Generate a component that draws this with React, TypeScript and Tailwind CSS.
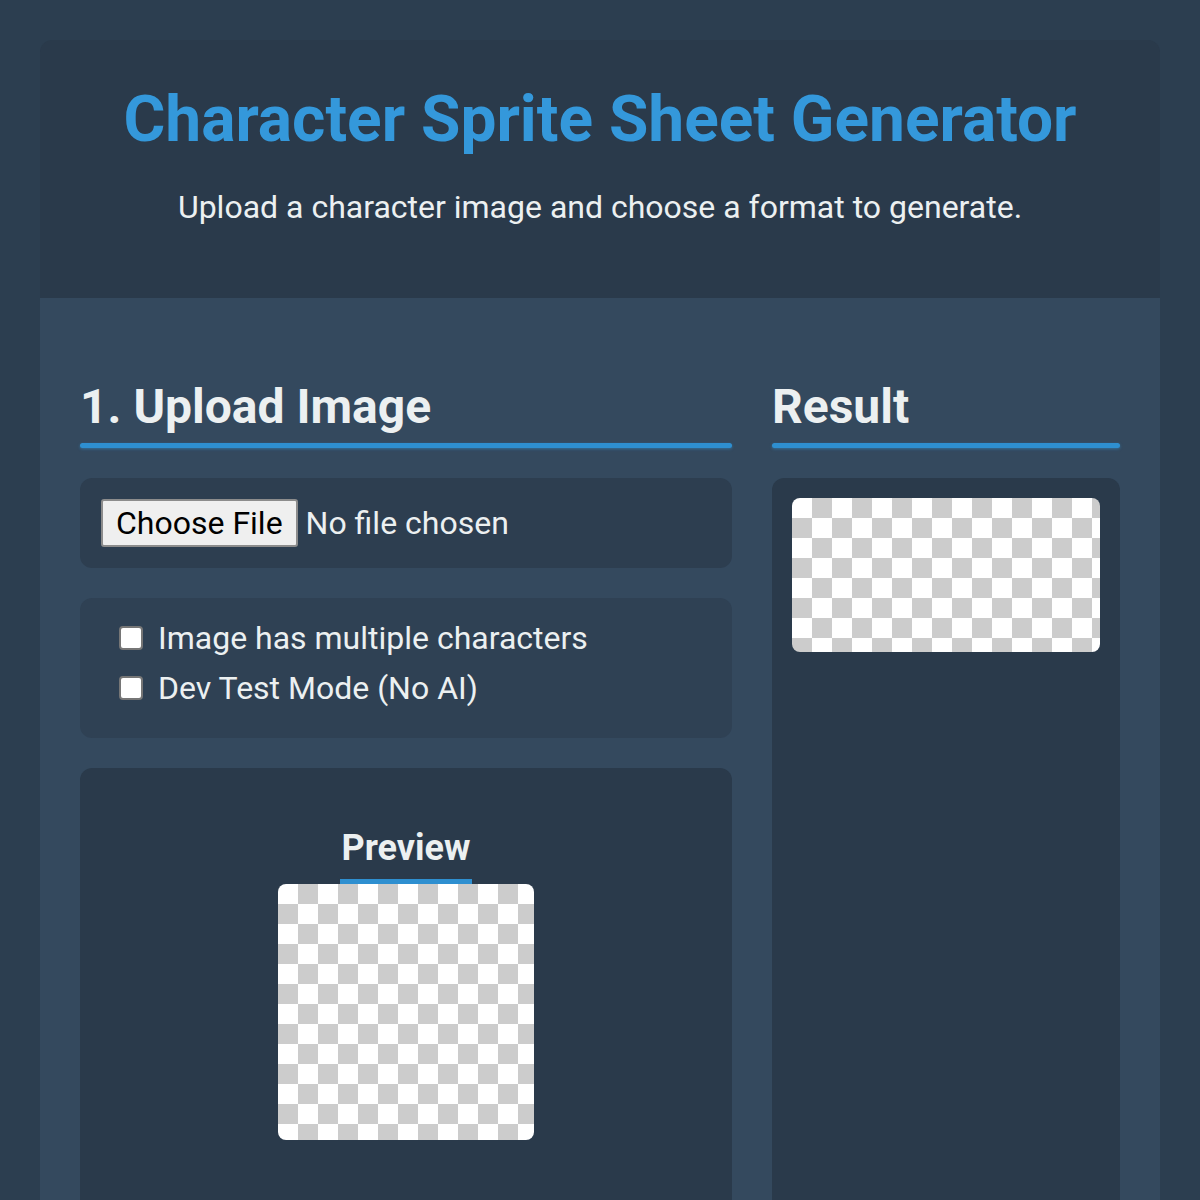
const checker =
  "bg-[conic-gradient(#ccc_0_25%,#fff_0_50%,#ccc_0_75%,#fff_0)] bg-[length:40px_40px]";

const SectionTitle = ({ children }: { children: string }) => (
  <div className="mb-[30px]">
    <h2 className="text-[48px] leading-[56px] font-bold text-[#ecf0f1] pt-[1px]">{children}</h2>
    <div className="mt-[8px] h-[5px] rounded-full bg-[#2e8fd0] shadow-[0_1px_3px_rgba(52,152,219,0.5)]" />
  </div>
);

export default function App() {
  return (
    <div className="min-h-[1200px] bg-[#2c3e50] px-[40px] pt-[40px] font-['Roboto',sans-serif]">
      <div className="rounded-t-[12px] bg-[#2a3a4b] h-[258px] flex flex-col items-center pt-[42px]">
        <h1 className="text-[64px] leading-[76px] font-bold text-[#3498db]">
          Character Sprite Sheet Generator
        </h1>
        <p className="mt-[31px] text-[32px] leading-[36px] text-[#ecf0f1]">
          Upload a character image and choose a format to generate.
        </p>
      </div>

      <div className="bg-[#34495e] px-[40px] pt-[80px] h-[902px] grid grid-cols-[652px_348px] gap-[40px]">
        <div className="flex flex-col">
          <SectionTitle>1. Upload Image</SectionTitle>

          <div className="h-[90px] rounded-[12px] bg-[#2d3e50] px-[21px] flex items-center gap-[8px]">
            <button className="h-[48px] px-[13px] rounded-[3px] border-[2px] border-[#8c8c8c] bg-[#efefef] text-[32px] text-black leading-none">
              Choose File
            </button>
            <span className="text-[32px] text-[#ecf0f1]">No file chosen</span>
          </div>

          <div className="mt-[30px] h-[140px] rounded-[12px] bg-[#2f4154] pl-[39px] pt-[28px] flex flex-col gap-[26px]">
            {["Image has multiple characters", "Dev Test Mode (No AI)"].map((label) => (
              <label key={label} className="flex items-center gap-[15px] h-[24px]">
                <span className="w-[24px] h-[24px] rounded-[4px] border-[2px] border-[#767676] bg-white" />
                <span className="text-[32px] text-[#ecf0f1] leading-none">{label}</span>
              </label>
            ))}
          </div>

          <div className="mt-[30px] flex-1 rounded-t-[12px] bg-[#2a3a4b] flex flex-col items-center pt-[58px]">
            <div className="flex flex-col items-center">
              <h3 className="text-[36px] leading-[44px] font-bold text-[#ecf0f1]">Preview</h3>
              <div className="mt-[9px] h-[5px] w-[132px] bg-[#2e8fd0]" />
            </div>
            <div className={`w-[256px] h-[256px] rounded-[8px] ${checker}`} />
          </div>
        </div>

        <div className="flex flex-col">
          <SectionTitle>Result</SectionTitle>
          <div className="flex-1 rounded-t-[12px] bg-[#2a3a4b] p-[20px]">
            <div className={`w-[308px] h-[154px] rounded-[8px] ${checker}`} />
          </div>
        </div>
      </div>
    </div>
  );
}
